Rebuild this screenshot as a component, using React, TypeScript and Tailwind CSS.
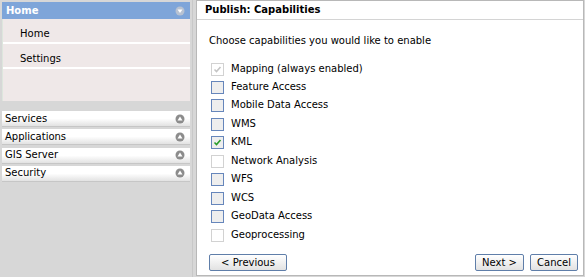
import React from "react";

const font = { fontFamily: "Verdana, 'DejaVu Sans', sans-serif" };

const CAPS = [
  { label: "Mapping (always enabled)", checked: true, disabled: true },
  { label: "Feature Access" },
  { label: "Mobile Data Access" },
  { label: "WMS" },
  { label: "KML", checked: true },
  { label: "Network Analysis", disabled: true },
  { label: "WFS" },
  { label: "WCS" },
  { label: "GeoData Access" },
  { label: "Geoprocessing", disabled: true },
];

// row heights to land each checkbox on the same pixel rows as the original
const ROW_H = ["h-[18px]", "h-[18px]", "h-[19px]", "h-[18px]", "h-[19px]", "h-[18px]", "h-[19px]", "h-[18px]", "h-[19px]", "h-[18px]"];

const SECTIONS = ["Services", "Applications", "GIS Server", "Security"];

function Circle({ up, light }: { up?: boolean; light?: boolean }) {
  return (
    <svg width="10" height="10" viewBox="0 0 10 10">
      <circle cx="5" cy="5" r="4.5" fill={light ? "#b7c2d2" : "#8c8c8c"} />
      {up ? (
        <path d="M5 2.5 L7.5 6.5 L2.5 6.5 Z" fill="#fff" />
      ) : (
        <path d="M2.5 3.5 L7.5 3.5 L5 7 Z" fill="#fff" />
      )}
    </svg>
  );
}

function Checkbox({ checked, disabled }: { checked?: boolean; disabled?: boolean }) {
  return (
    <div
      className={`w-[13px] h-[13px] shrink-0 border flex items-center justify-center ${
        disabled ? "border-[#d2d2d2] bg-white" : "border-[#6686bb] bg-[#eeeeee]"
      }`}>
      {checked && (
        <svg width="9" height="9" viewBox="0 0 9 9">
          <path
            d="M1.5 4.5 L3.5 6.5 L7.5 2"
            fill="none"
            stroke={disabled ? "#c4c4c4" : "#2a9d2a"}
            strokeWidth="1.6"
          />
        </svg>
      )}
    </div>
  );
}

function Button({ children, className = "" }: { children: React.ReactNode; className?: string }) {
  return (
    <button
      className={`h-[17px] whitespace-nowrap border border-[#5f7ea9] rounded-[2px] bg-gradient-to-b from-white to-[#e2e2e2] text-[10px] leading-none text-black ${className}`}>
      {children}
    </button>
  );
}

export default function App() {
  return (
    <div className="w-[585px] h-[277px] bg-[#d7d7d7] flex text-[10px] leading-[12px]" style={font}>
      {/* Sidebar */}
      <div className="w-[193px] pt-[2px] pl-[2px] pr-[2px] border-r border-[#c8c8c8] flex flex-col">
        <div className="h-[17px] bg-[#7ea5d9] flex items-center justify-between pl-[4px] pr-[5px]">
          <span className="text-white font-bold">Home</span>
          <Circle light />
        </div>
        <div className="bg-[#efe8e8] h-[82px] border-l border-[#dde6dd]">
          <div className="h-[25px] flex items-end pb-[2px] pl-[17px] border-b-2 border-white">Home</div>
          <div className="h-[25px] flex items-end pb-[2px] pl-[17px] border-b-2 border-white">Settings</div>
        </div>
        <div className="flex flex-col gap-[2.3px] mt-[10px]">
          {SECTIONS.map((s) => (
            <div
              key={s}
              className="h-[16px] flex items-center justify-between pl-[3px] pr-[5px] bg-gradient-to-b from-white from-50% to-[#e2e2e2] border-b border-[#c6c6c6]">
              <span>{s}</span>
              <Circle up />
            </div>
          ))}
        </div>
      </div>

      {/* Main panel */}
      <div className="ml-[3px] flex-1 mr-[1px] mb-[1px] bg-white border border-[#b8b8b8] flex flex-col">
        <div className="h-[19px] border-b border-[#d4d4d4] flex items-center pl-[8px] font-bold">
          Publish: Capabilities
        </div>
        <div className="pl-[12px] pt-[15px] flex flex-col">
          <div className="mb-[13px]">Choose capabilities you would like to enable</div>
          <div className="flex flex-col pl-[2px]">
            {CAPS.map((c, i) => (
              <div key={c.label} className={`${ROW_H[i]} flex items-start pt-[3px] gap-[7px]`}>
                <Checkbox checked={c.checked} disabled={c.disabled} />
                <span>{c.label}</span>
              </div>
            ))}
          </div>
        </div>
        <div className="mt-auto flex justify-between pl-[12px] pr-[5px] pb-[4px]">
          <Button className="w-[78px]">&lt; Previous</Button>
          <div className="flex gap-[6px]">
            <Button className="w-[49px]">Next &gt;</Button>
            <Button className="w-[48px]">Cancel</Button>
          </div>
        </div>
      </div>
    </div>
  );
}
